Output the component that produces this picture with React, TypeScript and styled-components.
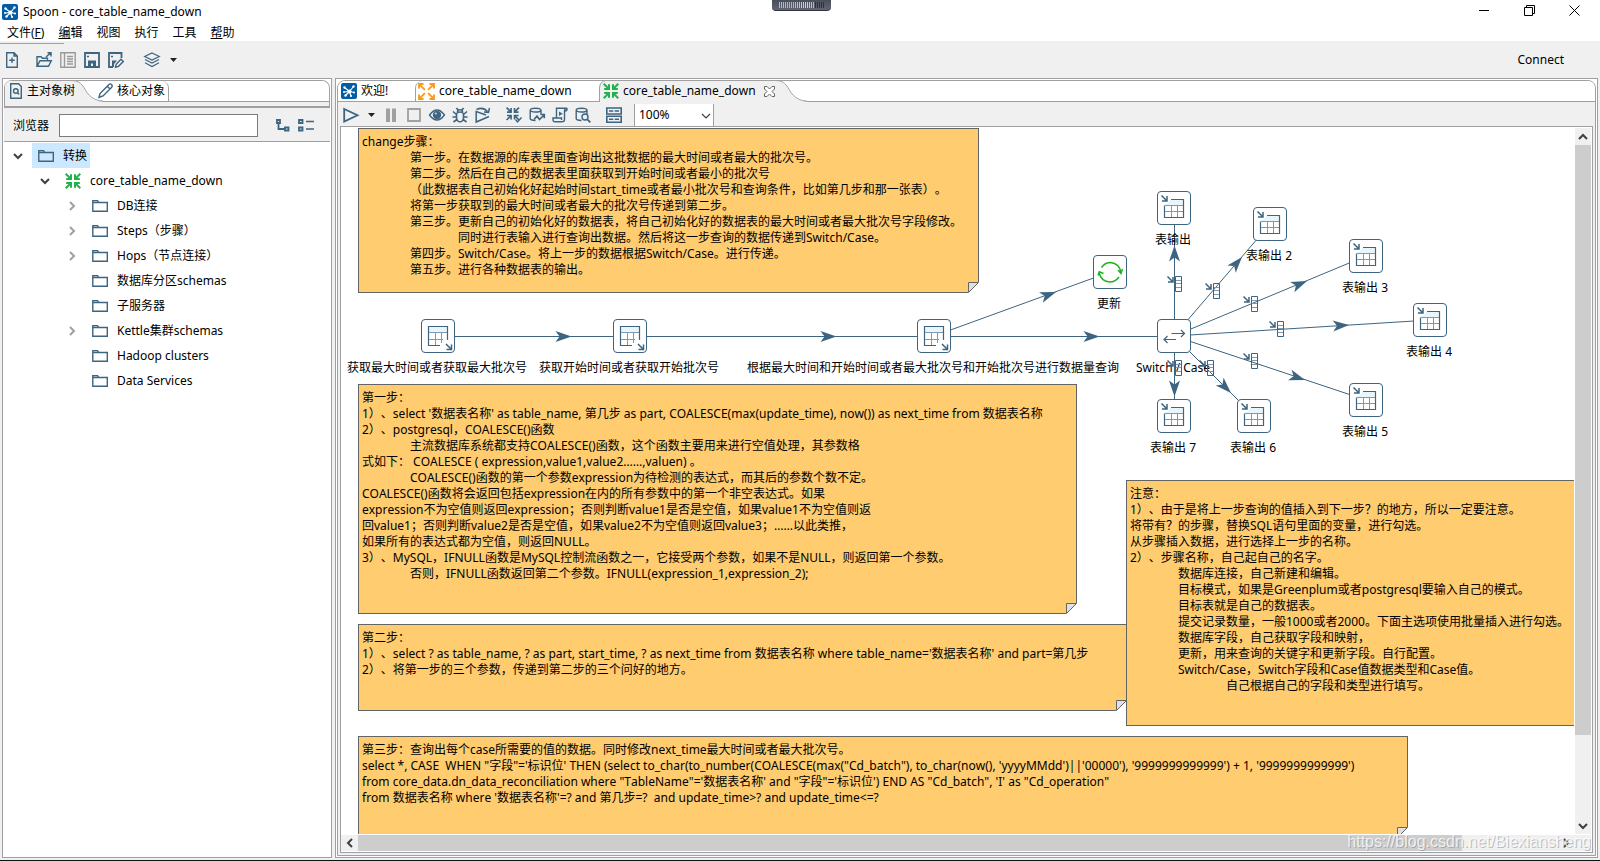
import React from 'react';
import styled, { createGlobalStyle, css } from 'styled-components';

const INK = '#3d6480';
const MUTED = '#a0a0a0';
const LINE = '#a0a0a4';
const FACE = '#f0f0f0';

const GlobalStyle = createGlobalStyle`
  *, *::before, *::after { box-sizing: border-box; }
  body {
    margin: 0;
    overflow: hidden;
    background: ${FACE};
    color: #000;
    font: 12px/16px "Noto Sans", "Noto Sans CJK SC", sans-serif;
    font-kerning: none;
    text-spacing-trim: space-all;
  }
  button, input, select { font: inherit; color: inherit; font-kerning: none; }
  button { padding: 0; border: 0; background: none; }
  svg { display: block; flex: none; overflow: visible; }
`;

/* ---------- window chrome ---------- */

const Window = styled.div`
  display: flex;
  flex-direction: column;
  height: 100vh;
  border-bottom: 1px solid #111;
`;

const TitleBar = styled.header`
  display: flex;
  align-items: center;
  height: 24px;
  padding: 0 20px 0 2px;
  gap: 5px;
  background: #fff;
`;

const Title = styled.h1`
  flex: 1;
  margin: 0;
  font-size: 12px;
  font-weight: 400;
`;

const WindowButtons = styled.div`
  display: flex;
  gap: 34px;
  padding-bottom: 4px;
`;

const Meter = styled.div`
  position: absolute;
  top: 0;
  left: 50%;
  width: 59px;
  height: 11px;
  margin-left: -28px;
  padding: 2px 7px;
  border-radius: 0 0 4px 4px;
  background: linear-gradient(#4a4d5a, #626574);
  border-bottom: 1px solid #33353f;
`;

const MenuBar = styled.nav`
  display: flex;
  gap: 14px;
  height: 17px;
  padding-left: 7px;
  background: #fff;
`;

const MainToolbar = styled.div`
  position: relative;
  display: flex;
  align-items: center;
  height: 37px;
  padding: 1px 36px 0 4px;
  gap: 8px;
  &::before {
    content: '';
    position: absolute;
    top: 2px;
    left: 0;
    width: 64px;
    height: 1px;
    background: ${MUTED};
  }
`;

const Spacer = styled.span<{ $w?: number }>`
  ${(p) => (p.$w === undefined ? css`flex: 1;` : css`width: ${p.$w}px;`)}
`;

const Workspace = styled.main`
  flex: 1;
  display: flex;
  gap: 3px;
  min-height: 0;
  padding: 0 2px 2px;
`;

const Panel = styled.section<{ $width?: number }>`
  display: flex;
  flex-direction: column;
  min-width: 0;
  padding: 1px;
  border: 1px solid ${LINE};
  background: #fff;
  ${(p) => (p.$width ? css`flex: none; width: ${p.$width}px;` : css`flex: 1;`)}
`;

/* ---------- tabs ---------- */

const SideHead = styled.div`
  height: 28px;
  border: 1px solid ${MUTED};
  border-bottom-width: 2px;
  border-radius: 8px 8px 0 0;
  background: ${FACE};
`;

const EditorFrame = styled.div`
  flex: 1;
  display: flex;
  flex-direction: column;
  min-height: 0;
  padding: 0 2px 2px;
  border: 1px solid ${MUTED};
  border-radius: 8px 8px 0 0;
  background: ${FACE};
`;

const TabStrip = styled.div<{ $bleed?: boolean }>`
  display: flex;
  height: 21px;
  border-bottom: 1px solid ${MUTED};
  border-radius: 7px 7px 0 0;
  background: #fff;
  ${(p) => p.$bleed && css`margin: 0 -2px;`}
`;

const Tab = styled.button<{ $width: number; $pad: number; $edge?: 'left' | 'right' }>`
  position: relative;
  display: flex;
  align-items: center;
  gap: 4px;
  height: 20px;
  width: ${(p) => p.$width}px;
  padding-left: ${(p) => p.$pad}px;
  white-space: nowrap;
  ${(p) => p.$edge === 'left' && css`border-left: 1px solid ${MUTED}; border-radius: 7px 0 0 0;`}
  ${(p) => p.$edge === 'right' && css`border-right: 1px solid ${MUTED}; border-radius: 0 7px 0 0;`}
  & > svg, & > span { position: relative; }
`;

const TabBack = styled.svg`
  && { position: absolute; top: 0; left: 0; }
`;

function ActiveShape({ w, edge }: { w: number; edge?: boolean }) {
  const curve = `c10 0 12 8 15 12 s8 8.500 16 8.500`;
  return (
    <TabBack width={w} height="21" aria-hidden>
      <path d={`M0 21V5Q1 0 6 0H${w - 31}${curve}V21Z`} fill={FACE} />
      <path d={`M${w - 31} -.5${curve}`} fill="none" stroke={MUTED} />
      {edge && <path d="M.5 21V7Q1 0 7 -.5" fill="none" stroke={MUTED} />}
    </TabBack>
  );
}

/* ---------- side tree ---------- */

const SearchBar = styled.label`
  display: flex;
  align-items: center;
  height: 34px;
  padding: 2px 0 0 9px;
  gap: 8px;
  border-bottom: 1px solid ${MUTED};
  background: ${FACE};
`;

const SearchInput = styled.input`
  width: 199px;
  height: 23px;
  margin: 0 8px 0 2px;
  border: 1px solid #7a7a7a;
  background: #fff;
`;

const Tree = styled.ul`
  list-style: none;
  margin: 1px 0 0;
  padding: 0;
`;

const TreeRow = styled.li<{ $level: number }>`
  display: flex;
  align-items: center;
  height: 25px;
  padding-left: ${(p) => p.$level * 27 + 8}px;
`;

const Twisty = styled.span`
  display: flex;
  justify-content: center;
  width: 12px;
  margin-right: 8px;
`;

const TreeItem = styled.span<{ $selected?: boolean }>`
  display: flex;
  align-items: center;
  gap: 9px;
  height: 25px;
  padding: 0 3px 0 6px;
  background: ${(p) => (p.$selected ? '#cce8ff' : 'transparent')};
`;

/* ---------- editor ---------- */

const EditorToolbar = styled.div`
  display: flex;
  align-items: center;
  height: 24px;
  padding: 2px 0 0 3px;
  gap: 7px;
`;

const ZoomBox = styled.div`
  position: relative;
  align-self: stretch;
  width: 80px;
  margin-left: 5px;
  & > svg { position: absolute; right: 3px; top: 7px; pointer-events: none; }
`;

const ZoomSelect = styled.select`
  appearance: none;
  display: block;
  width: 100%;
  height: 22px;
  padding: 0 0 1px 4px;
  border: 1px solid ${MUTED};
  border-width: 0 1px;
  border-radius: 0;
  background: #fff;
`;

const CanvasFrame = styled.div`
  flex: 1;
  display: grid;
  grid-template: minmax(0, 1fr) 16px / minmax(0, 1fr) 16px;
  gap: 1px 1px;
  min-height: 0;
  padding: 0 1px 1px 0;
  border: 1px solid ${LINE};
  background: #fff;
`;

const Canvas = styled.div`
  position: relative;
  overflow: hidden;
`;

const HopLayer = styled.svg`
  position: absolute;
  top: 0;
  left: 0;
`;

const Note = styled.div<{ $x: number; $y: number; $w: number; $h: number }>`
  position: absolute;
  left: ${(p) => p.$x}px;
  top: ${(p) => p.$y}px;
  width: ${(p) => p.$w}px;
  height: ${(p) => p.$h}px;
  padding: 5px 3px;
  border: 1px solid #646464;
  background: #ffcc70;
  white-space: pre;
  tab-size: 48px;
`;

const Fold = styled.svg`
  position: absolute;
  right: -1px;
  bottom: -1px;
`;

const Node = styled.div<{ $x: number; $y: number }>`
  position: absolute;
  left: ${(p) => p.$x}px;
  top: ${(p) => p.$y}px;
  display: flex;
  flex-direction: column;
  align-items: center;
  gap: 7px;
  width: 34px;
  white-space: nowrap;
`;

const NodeBox = styled.span`
  width: 34px;
  height: 34px;
  border: 1px solid ${INK};
  border-radius: 4px;
  background: #fff;
`;

const NodeLabel = styled.span`
  margin-right: 2px;
`;

const ScrollTrack = styled.div<{ $vertical?: boolean }>`
  display: flex;
  align-items: center;
  min-width: 0;
  min-height: 0;
  background: ${FACE};
  ${(p) => (p.$vertical ? css`flex-direction: column; margin-top: 1px;` : css`width: 100%; grid-column: 1 / 3;`)}
`;

const ScrollThumb = styled.div<{ $grow: number }>`
  flex: ${(p) => p.$grow};
  align-self: stretch;
  background: #cdcdcd;
`;

const ScrollRest = styled.div<{ $grow: number }>`
  flex: ${(p) => p.$grow};
`;

const ScrollButton = styled.button`
  flex: none;
  display: flex;
  align-items: center;
  justify-content: center;
  width: 17px;
  height: 17px;
`;

const Watermark = styled.span`
  position: absolute;
  right: 9px;
  bottom: 9px;
  color: rgba(255, 255, 255, 0.75);
  font: 16px/20px "Liberation Sans", "Noto Sans CJK SC", sans-serif;
  text-shadow: 1px 1px 0 rgba(120, 120, 120, 0.45);
`;

const ToolButton = styled.button`
  display: flex;
  align-items: center;
  justify-content: center;
  min-width: 8px;
  height: 16px;
`;

/* ---------- icons ---------- */

const Logo = () => (
  <svg width="16" height="16" viewBox="0 0 16 16" aria-hidden>
    <rect width="16" height="16" rx="2" fill="#005da6" />
    <path d="M3.500 4.500l5 4M8.500 8.500l4-5M8.500 8.500l5 1M8.500 8.500l1.500 4.500M8.500 8.500l-5 .5M8.500 8.500l-4 4" stroke="#fff" strokeWidth="1.200" />
    <g fill="#fff"><circle cx="8.500" cy="8.500" r="2" /><circle cx="3.500" cy="4.500" r="1.200" /><circle cx="12.500" cy="3.500" r="1.200" /><circle cx="13" cy="9.500" r="1" /><circle cx="10" cy="13" r="1.100" /><circle cx="3" cy="9" r="1" /><circle cx="4.500" cy="12.500" r="1.200" /></g>
  </svg>
);

const ArrowsIn = ({ color = '#22b14c', size = 16 }: { color?: string; size?: number }) => (
  <svg width={size} height={size} viewBox="0 0 16 16" fill="none" stroke={color} strokeWidth="2" aria-hidden>
    {[0, 90, 180, 270].map((a) => (
      <path key={a} transform={`rotate(${a} 8 8)`} d="M.7.7L5.500 5.500M6 1.200V6H1.200" />
    ))}
  </svg>
);

const ArrowsOut = () => (
  <svg width="17" height="17" viewBox="0 0 16 16" fill="none" stroke="#f79a1e" strokeWidth="1.800" aria-hidden>
    {[0, 90, 180, 270].map((a) => (
      <path key={a} transform={`rotate(${a} 8 8)`} d="M6.500 6.500L1.500 1.500M1 5.200V1H5.200" />
    ))}
  </svg>
);

const Glyph = ({ color = INK, w = 16, children }: { color?: string; w?: number; children: React.ReactNode }) => (
  <svg width={w} height="16" viewBox={`0 0 ${w} 16`} fill="none" stroke={color} strokeWidth="1.400" aria-hidden>
    {children}
  </svg>
);

const NewIcon = () => <Glyph><path d="M2.700.7H10l3.300 3.300V15.300H2.700ZM10 .7V4H13.300M8 5.500V11M5.200 8.200H10.800" /></Glyph>;
const OpenIcon = () => <Glyph><path d="M1 14.300V4.700H5L6.500 6.200H11.500V8M1 14.300L4 8.700H15.300L12.500 14.300ZM10 5L14.500 1M11.500.7H15V4.500" /></Glyph>;
const ListIcon = () => <Glyph color="#999"><path d="M.8.8H15.200V15.200H.8ZM4.500.8V15.200M7 4.500H13M7 7H13M7 9.500H13M7 12H13" /></Glyph>;
const SaveIcon = () => <Glyph><path d="M1 1H15V15H1Z" strokeWidth="1.800" /><path d="M4 8.500H12V15H9V11.500H7V15H4Z" fill={INK} stroke="none" /><path d="M3 4.500H5" /></Glyph>;
const SaveAsIcon = () => <Glyph><path d="M13.500 6V1H1V15H5" strokeWidth="1.800" /><path d="M4 8.500H9L6 12V15H4Z" fill={INK} stroke="none" /><path d="M3 4.500H5M7.500 15.200L8.300 12 13 7.300 15.300 9.500 10.500 14.300Z" /></Glyph>;
const LayersIcon = () => <Glyph><path d="M8 1L15.300 4.500 8 8 .7 4.500ZM1 7.500L8 11 15 7.500M1 10.800L8 14.500 15 10.800" strokeWidth="1.200" /></Glyph>;
const Caret = () => <Glyph w={10}><path d="M2 6H9L5.500 10Z" fill="#222" stroke="none" /></Glyph>;
const PlayIcon = () => <Glyph><path d="M1.200 2L14.500 8.300 1.200 14.500Z" strokeWidth="1.800" /></Glyph>;
const PauseIcon = () => <Glyph><path d="M5 1.500V15M11 1.500V15" stroke="#a0a0a0" strokeWidth="4" /></Glyph>;
const StopIcon = () => <Glyph color="#a0a0a0"><path d="M2 2H14V14H2Z" strokeWidth="1.800" /></Glyph>;
const EyeIcon = () => <Glyph><path d="M.5 8Q8 -2 15.500 8 8 18 .5 8Z" /><circle cx="8" cy="8" r="4.200" fill={INK} stroke="none" /><circle cx="6.800" cy="6.500" r="1.100" fill="#c8d6e0" stroke="none" /></Glyph>;
const BugIcon = () => <Glyph><path d="M4.500 6.500Q8 3.500 11.500 6.500V11Q11 14.800 8 14.800T4.500 11ZM5.500 5Q5.500 2.800 8 2.800T10.500 5M4.500 1L6 3M11.500 1L10 3M1 4.500L4.500 7.500M15 4.500L11.500 7.500M.5 10H4.500M11.500 10H15.500M1.500 15L4.800 12.500M14.500 15L11.200 12.500" strokeWidth="1.600" /></Glyph>;
const ReplayIcon = () => <Glyph><path d="M14 9.500L1.200 15V4.500L11 8M1.500 2.500Q8-.5 12.500 4.500M14.500 1L13.500 5.500 9 5" strokeWidth="1.500" /></Glyph>;
const VerifyIcon = () => (
  <Glyph><g transform="scale(.85)" strokeWidth="1.900">{[0, 90, 180, 270].map((a) => <path key={a} transform={`rotate(${a} 8 8)`} d="M.7.7L5.500 5.500M6 1.200V6H1.200" />)}</g><path d="M9.500 12.500L11.500 15 15.500 10.500" /></Glyph>
);
const Cylinder = () => <path d="M6.500 13.500Q1.200 13.500 1.200 11.500V3.200Q1.200 1.200 6.500 1.200T12 3.200V7M1.200 3.200Q1.500 5 6.500 5T12 3.200" />;
const ImpactIcon = () => <Glyph><Cylinder /><path d="M5 12.500L8 9 10.500 12.500 15 8M11.500 7.500H15.300V11.300" strokeWidth="1.600" /></Glyph>;
const SqlIcon = () => <Glyph><path d="M4.500 10.500V1.200H15M15 1.200Q12.500 1.200 12.500 4V12.500Q12.500 14.800 10 14.800H3Q1 14.800 1 12.700V11H9.500V13M15 1.200Q15.500 4 13 4" /><path d="M7 4.500L10.800 6.800 7 9Z" fill={INK} stroke="none" /></Glyph>;
const ExploreIcon = () => <Glyph><Cylinder /><circle cx="10" cy="10" r="3" fill={FACE} /><path d="M12.300 12.300L15.300 15.300" strokeWidth="1.800" /></Glyph>;
const ResultsIcon = () => <Glyph><path d="M.8 1H15.200V7H.8ZM.8 9.200H15.200V15.200H.8ZM3 4H7.300M8.700 4H13M3 12.200H7.300M8.700 12.200H13" strokeWidth="1.600" /></Glyph>;
const PageSearch = () => <Glyph w={14}><path d="M1.700.7H9.500L12.300 3.500V15.300H1.700Z" /><circle cx="6.800" cy="8" r="2.300" /><path d="M8.500 9.700L10.200 11.500" /></Glyph>;
const Pencil = () => <Glyph><path d="M2 14.500L3 10.500 11.500 2Q13-.0 14.500 1.500T14.500 4.500L6 13ZM10.500 3.500L13 6" /></Glyph>;
const CloseTab = () => (
  <svg width="11" height="11" viewBox="0 0 11 11" fill="#fff" stroke="#666" aria-hidden>
    <path d="M.5.5H3L5.500 3 8 .5H10.500V3L8 5.500 10.500 8V10.500H8L5.500 8 3 10.500H.5V8L3 5.500.5 3Z" />
  </svg>
);
const Folder = () => <Glyph><path d="M.8 13.300V2.700H5.500L6.700 4.500H15.300V13.300ZM.8 4.600H6.500" /></Glyph>;
const ExpandTreeIcon = () => <Glyph><path d="M3 2H6V5H3ZM11 9.500H14.500V12.500H11ZM4.500 5V11H11" strokeWidth="1.800" /></Glyph>;
const CollapseTreeIcon = () => <Glyph><path d="M1 2H4.500V5H1ZM1 9.500H4.500V12.500H1Z" strokeWidth="1.800" /><path d="M8 3.500H16M8 11H16" /></Glyph>;

const Chevron = ({ dir, color = '#404040', thin }: { dir: 'up' | 'down' | 'left' | 'right'; color?: string; thin?: boolean }) => {
  const turn = { down: 0, left: 90, up: 180, right: 270 }[dir];
  return (
    <svg width="10" height="10" viewBox="0 0 10 10" aria-hidden>
      <path d="M1 3L5 7 9 3" transform={`rotate(${turn} 5 5)`} fill="none" stroke={color} strokeWidth={thin ? 1.2 : 2} />
    </svg>
  );
};

type NodeKind = 'input' | 'output' | 'update' | 'switch';

const NodeIcon = ({ kind }: { kind: NodeKind }) => (
  <svg width="32" height="32" viewBox="1 1 32 32" fill="none" stroke={INK} aria-hidden>
    {kind === 'input' && (
      <>
        <path d="M8 8H27V13H8Z" fill="#e9f4fb" stroke="none" />
        <path d="M19 26.500H7.500V7.500H26.500V21" strokeWidth="1.200" />
        <path d="M8 13.500H26M8 20.500H22M14.500 14V26M20.500 14V24" stroke="#7d9ab0" />
        <path d="M25 25L30 30M30.500 25.500V30.500H25.500" strokeWidth="1.500" />
      </>
    )}
    {kind === 'output' && (
      <>
        <path d="M15 8.500H26V14H8Z" fill="#e9f4fb" stroke="none" />
        <path d="M14 8.500H26.500V26.500H7.500V14.500" strokeWidth="1.200" />
        <path d="M8 14.500H26M8 20.500H26M14.500 15V26M20.500 15V26" stroke="#7d9ab0" />
        <path d="M4.500 4.500L9.500 9.500M10 5V10H5" strokeWidth="1.500" />
      </>
    )}
    {kind === 'update' && (
      <g stroke="#1db51d" strokeWidth="1.500">
        <path d="M8.500 12.500Q12 7.500 17.500 7.500 26.500 8.500 28 17.500M25 15L28 18.500 29.500 14M26 22Q22 27 17 27 8 26.500 6 17.500M5 20.500L6.300 16.800 10.500 18.500" />
      </g>
    )}
    {kind === 'switch' && <path d="M14.500 14.500H27.500M24 11L27.500 14.500 24 18M19 20.500H7M10.500 17L7 20.500 10.500 24" strokeWidth="1.200" />}
  </svg>
);

/* ---------- data ---------- */

const tree: { level: number; label: string; open?: boolean; closed?: boolean; selected?: boolean; trans?: boolean }[] = [
  { level: 0, label: '转换', open: true, selected: true },
  { level: 1, label: 'core_table_name_down', open: true, trans: true },
  { level: 2, label: 'DB连接', closed: true },
  { level: 2, label: 'Steps（步骤）', closed: true },
  { level: 2, label: 'Hops（节点连接）', closed: true },
  { level: 2, label: '数据库分区schemas' },
  { level: 2, label: '子服务器' },
  { level: 2, label: 'Kettle集群schemas', closed: true },
  { level: 2, label: 'Hadoop clusters' },
  { level: 2, label: 'Data Services' },
];

const nodes: { x: number; y: number; label: string; kind: NodeKind }[] = [
  { x: 80, y: 192, label: '获取最大时间或者获取最大批次号', kind: 'input' },
  { x: 272, y: 192, label: '获取开始时间或者获取开始批次号', kind: 'input' },
  { x: 576, y: 192, label: '根据最大时间和开始时间或者最大批次号和开始批次号进行数据量查询', kind: 'input' },
  { x: 752, y: 128, label: '更新', kind: 'update' },
  { x: 816, y: 192, label: 'Switch / Case', kind: 'switch' },
  { x: 816, y: 64, label: '表输出', kind: 'output' },
  { x: 912, y: 80, label: '表输出 2', kind: 'output' },
  { x: 1008, y: 112, label: '表输出 3', kind: 'output' },
  { x: 1072, y: 176, label: '表输出 4', kind: 'output' },
  { x: 1008, y: 256, label: '表输出 5', kind: 'output' },
  { x: 896, y: 272, label: '表输出 6', kind: 'output' },
  { x: 816, y: 272, label: '表输出 7', kind: 'output' },
];

/* from node, to node, arrow tip */
const hops: [number, number, number, number][] = [
  [0, 1, 230, 209],
  [1, 2, 495, 209],
  [2, 3, 715, 165],
  [2, 4, 758, 209],
  [4, 5, 833, 118],
  [4, 6, 901, 130],
  [4, 7, 966, 154],
  [4, 8, 1008, 198],
  [4, 9, 964, 253],
  [4, 10, 890, 266],
  [4, 11, 833, 269],
];

const targets: [number, number][] = [
  [826, 149], [864, 156], [902, 169], [928, 194], [902, 226], [858, 233], [826, 233],
];

const notes: { x: number; y: number; w: number; h: number; text: string }[] = [
  {
    x: 17, y: 1, w: 621, h: 165,
    text: `change步骤：
\t第一步。在数据源的库表里面查询出这批数据的最大时间或者最大的批次号。
\t第二步。然后在自己的数据表里面获取到开始时间或者最小的批次号
\t（此数据表自己初始化好起始时间start_time或者最小批次号和查询条件，比如第几步和那一张表）。
\t将第一步获取到的最大时间或者最大的批次号传递到第二步。
\t第三步。更新自己的初始化好的数据表，将自己初始化好的数据表的最大时间或者最大批次号字段修改。
\t\t同时进行表输入进行查询出数据。然后将这一步查询的数据传递到Switch/Case。
\t第四步。Switch/Case。将上一步的数据根据Switch/Case。进行传递。
\t第五步。进行各种数据表的输出。`,
  },
  {
    x: 17, y: 257, w: 719, h: 230,
    text: `第一步：
1）、select '数据表名称' as table_name, 第几步 as part, COALESCE(max(update_time), now()) as next_time from 数据表名称
2）、postgresql，COALESCE()函数
\t主流数据库系统都支持COALESCE()函数，这个函数主要用来进行空值处理，其参数格
式如下： COALESCE ( expression,value1,value2……,valuen) 。
\tCOALESCE()函数的第一个参数expression为待检测的表达式，而其后的参数个数不定。
COALESCE()函数将会返回包括expression在内的所有参数中的第一个非空表达式。如果
expression不为空值则返回expression；否则判断value1是否是空值，如果value1不为空值则返
回value1；否则判断value2是否是空值，如果value2不为空值则返回value3；……以此类推，
如果所有的表达式都为空值，则返回NULL。
3）、MySQL，IFNULL函数是MySQL控制流函数之一，它接受两个参数，如果不是NULL，则返回第一个参数。
\t否则，IFNULL函数返回第二个参数。IFNULL(expression_1,expression_2);`,
  },
  {
    x: 17, y: 497, w: 769, h: 87,
    text: `第二步：
1）、select ? as table_name, ? as part, start_time, ? as next_time from 数据表名称 where table_name='数据表名称' and part=第几步
2）、将第一步的三个参数，传递到第二步的三个问好的地方。`,
  },
  {
    x: 785, y: 353, w: 480, h: 246,
    text: `注意：
1）、由于是将上一步查询的值插入到下一步？的地方，所以一定要注意。
将带有？的步骤，替换SQL语句里面的变量，进行勾选。
从步骤插入数据，进行选择上一步的名称。
2）、步骤名称，自己起自己的名字。
\t数据库连接，自己新建和编辑。
\t目标模式，如果是Greenplum或者postgresql要输入自己的模式。
\t目标表就是自己的数据表。
\t提交记录数量，一般1000或者2000。下面主选项使用批量插入进行勾选。
\t数据库字段，自己获取字段和映射，
\t更新，用来查询的关键字和更新字段。自行配置。
\tSwitch/Case，Switch字段和Case值数据类型和Case值。
\t\t自己根据自己的字段和类型进行填写。`,
  },
  {
    x: 17, y: 609, w: 1050, h: 102,
    text: `第三步：查询出每个case所需要的值的数据。同时修改next_time最大时间或者最大批次号。
select *, CASE  WHEN "字段"='标识位' THEN (select to_char(to_number(COALESCE(max("Cd_batch"), to_char(now(), 'yyyyMMdd')||'00000'), '9999999999999') + 1, '9999999999999')
from core_data.dn_data_reconciliation where "TableName"='数据表名称' and "字段"='标识位') END AS "Cd_batch", 'I' as "Cd_operation"
from 数据表名称 where '数据表名称'=? and 第几步=?  and update_time>? and update_time<=?`,
  },
];

const mainTools: [string, () => React.JSX.Element][] = [
  ['打开', OpenIcon], ['资源库', ListIcon], ['保存', SaveIcon], ['另存为', SaveAsIcon],
];

const runTools: [string, () => React.JSX.Element][] = [
  ['暂停', PauseIcon], ['停止', StopIcon], ['预览', EyeIcon], ['调试', BugIcon], ['重放', ReplayIcon],
];

const checkTools: [string, () => React.JSX.Element][] = [
  ['校验', VerifyIcon], ['影响分析', ImpactIcon], ['SQL', SqlIcon], ['浏览数据库', ExploreIcon],
];

/* ---------- parts ---------- */

function Tool({ name, children }: { name: string; children: React.ReactNode }) {
  return <ToolButton type="button" aria-label={name}>{children}</ToolButton>;
}

function Hops() {
  return (
    <HopLayer width="1232" height="706" aria-hidden>
      {hops.map(([a, b, tx, ty], i) => {
        const x1 = nodes[a].x + 17, y1 = nodes[a].y + 17;
        const x2 = nodes[b].x + 17, y2 = nodes[b].y + 17;
        const angle = (Math.atan2(y2 - y1, x2 - x1) * 180) / Math.PI;
        const straight = x1 === x2 || y1 === y2;
        const o = straight ? 0.5 : 0;
        return (
          <g key={i}>
            <line x1={x1 + o} y1={y1 + o} x2={x2 + o} y2={y2 + o} stroke={INK} />
            <path d="M0 0L-16 5.500-12 0-16-5.500Z" fill={INK} transform={`translate(${tx + o} ${ty + o}) rotate(${angle})`} />
          </g>
        );
      })}
    </HopLayer>
  );
}

function TargetMarks() {
  return (
    <HopLayer width="1232" height="706" fill="none" stroke={INK} aria-hidden>
      {targets.map(([x, y]) => (
        <g key={`${x}-${y}`} transform={`translate(${x} ${y})`}>
          <path d="M8.500.5H14.500V15.500H8.500Z" />
          <path d="M9 4.500H14M9 7.500H14M9 11.500H14" stroke="#7d9ab0" />
          <path d="M.5.5L5.500 5.500M6 1V6H1" strokeWidth="1.500" />
        </g>
      ))}
    </HopLayer>
  );
}

export default function App() {
  return (
    <Window>
      <GlobalStyle />
      <TitleBar>
        <Logo />
        <Title>Spoon - core_table_name_down</Title>
        <WindowButtons>
          <ToolButton type="button" aria-label="最小化"><svg width="11" height="11"><path d="M0 5.500H10" stroke="#000" /></svg></ToolButton>
          <ToolButton type="button" aria-label="还原"><svg width="11" height="11" fill="none" stroke="#000"><path d="M.5 2.500H8.500V10.500H.5ZM2.500 2.500V.5H10.500V8.500H8.500" /></svg></ToolButton>
          <ToolButton type="button" aria-label="关闭"><svg width="11" height="11"><path d="M.5.5L10.500 10.500M10.500.5L.5 10.500" stroke="#000" /></svg></ToolButton>
        </WindowButtons>
      </TitleBar>
      <Meter aria-hidden>
        <svg width="45" height="6">
          {Array.from({ length: 23 }, (_, i) => (
            <rect key={i} x={i * 2} y="0" width="1" height="6" fill={i > 17 ? '#30323c' : `hsl(${170 - i * 8} 65% 65%)`} />
          ))}
        </svg>
      </Meter>
      <MenuBar>
        <button type="button">文件(<u>F</u>)</button>
        <button type="button"><u>编</u>辑</button>
        <button type="button">视图</button>
        <button type="button">执行</button>
        <button type="button">工具</button>
        <button type="button"><u>帮</u>助</button>
      </MenuBar>
      <MainToolbar>
        <Tool name="新建"><NewIcon /></Tool>
        <Spacer $w={0} />
        {mainTools.map(([name, Icon]) => <Tool key={name} name={name}><Icon /></Tool>)}
        <Spacer $w={4} />
        <Tool name="透视图"><LayersIcon /></Tool>
        <Tool name="透视图菜单"><Caret /></Tool>
        <Spacer />
        <button type="button">Connect</button>
      </MainToolbar>

      <Workspace>
        <Panel $width={330}>
          <SideHead>
            <TabStrip role="tablist">
              <Tab role="tab" $width={88} $pad={4}>
                <ActiveShape w={98} />
                <PageSearch />
                <span>主对象树</span>
              </Tab>
              <Tab role="tab" $width={76} $pad={4} $edge="right">
                <Pencil />
                <span>核心对象</span>
              </Tab>
            </TabStrip>
          </SideHead>
          <SearchBar>
            浏览器
            <SearchInput type="text" />
            <ExpandTreeIcon />
            <CollapseTreeIcon />
          </SearchBar>
          <Tree>
            {tree.map((row) => (
              <TreeRow key={row.label} $level={row.level}>
                <Twisty>
                  {row.open && <Chevron dir="down" />}
                  {row.closed && <Chevron dir="right" color={MUTED} />}
                </Twisty>
                <TreeItem $selected={row.selected}>
                  {row.trans ? <ArrowsIn /> : <Folder />}
                  {row.label}
                </TreeItem>
              </TreeRow>
            ))}
          </Tree>
        </Panel>

        <Panel>
          <EditorFrame>
            <TabStrip role="tablist" $bleed>
              <Tab role="tab" $width={77} $pad={3}>
                <Logo />
                <span>欢迎!</span>
              </Tab>
              <Tab role="tab" $width={184} $pad={2} $edge="left">
                <ArrowsOut />
                <span>core_table_name_down</span>
              </Tab>
              <Tab role="tab" $width={200} $pad={4}>
                <ActiveShape w={208} edge />
                <ArrowsIn />
                <span>core_table_name_down</span>
                <Spacer $w={0} />
                <CloseTab />
              </Tab>
            </TabStrip>
            <EditorToolbar>
              <Tool name="运行"><PlayIcon /></Tool>
              <Tool name="运行选项"><Caret /></Tool>
              {runTools.map(([name, Icon]) => <Tool key={name} name={name}><Icon /></Tool>)}
              <Spacer $w={1} />
              {checkTools.map(([name, Icon]) => <Tool key={name} name={name}><Icon /></Tool>)}
              <Spacer $w={1} />
              <Tool name="显示结果"><ResultsIcon /></Tool>
              <ZoomBox>
                <ZoomSelect aria-label="缩放" defaultValue="100%">
                  <option>200%</option>
                  <option>100%</option>
                  <option>50%</option>
                </ZoomSelect>
                <Chevron dir="down" thin />
              </ZoomBox>
            </EditorToolbar>
            <CanvasFrame>
              <Canvas>
                {notes.map((n) => (
                  <Note key={n.y} $x={n.x} $y={n.y} $w={n.w} $h={n.h}>
                    {n.text}
                    <Fold width="11" height="11" aria-hidden>
                      <path d="M0 0H11V11H0Z" fill="#fff" />
                      <path d="M.5 10.500V.5H10.500Z" fill="#e0e0e0" stroke="#646464" />
                    </Fold>
                  </Note>
                ))}
                <Hops />
                {nodes.map((n) => (
                  <Node key={n.label} $x={n.x} $y={n.y}>
                    <NodeBox><NodeIcon kind={n.kind} /></NodeBox>
                    <NodeLabel>{n.label}</NodeLabel>
                  </Node>
                ))}
                <TargetMarks />
              </Canvas>
              <ScrollTrack $vertical>
                <ScrollButton type="button" aria-label="向上滚动"><Chevron dir="up" /></ScrollButton>
                <ScrollThumb $grow={592} />
                <ScrollRest $grow={82} />
                <ScrollButton type="button" aria-label="向下滚动"><Chevron dir="down" /></ScrollButton>
              </ScrollTrack>
              <ScrollTrack>
                <ScrollButton type="button" aria-label="向左滚动"><Chevron dir="left" /></ScrollButton>
                <ScrollThumb $grow={1103} />
                <ScrollRest $grow={95} />
                <ScrollButton type="button" aria-label="向右滚动"><Chevron dir="right" /></ScrollButton>
                <ScrollButton as="span" />
              </ScrollTrack>
            </CanvasFrame>
          </EditorFrame>
        </Panel>
      </Workspace>
      <Watermark>https://blog.csdn.net/Biexiansheng</Watermark>
    </Window>
  );
}
